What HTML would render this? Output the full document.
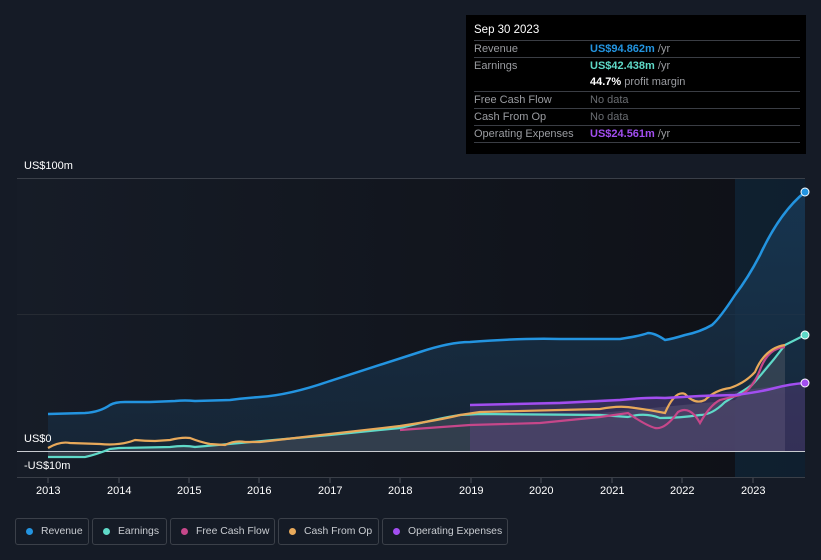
<!DOCTYPE html>
<html><head><meta charset="utf-8"><style>
html,body{margin:0;width:821px;height:560px;overflow:hidden}
body{background:#151b26;font-family:"Liberation Sans",sans-serif;position:relative}
.tt{position:absolute;left:466px;top:15px;width:340px;height:139px;background:#000;color:#fff;font-size:11px}
.tt .h{position:absolute;left:8px;top:9px;font-size:11.5px}
.row{position:absolute;left:8px;width:326px;height:17px;border-top:1px solid #3a3d44;color:#9a9ca1;font-size:11px;line-height:17px;white-space:nowrap}
.row span{position:absolute;left:116px}
.leg{position:absolute;top:518px;height:27px;border:1px solid #3b4049;border-radius:3px;color:#c9ccd1;font-size:10.4px;line-height:25px;box-sizing:border-box;white-space:nowrap}
.leg i{position:absolute;left:10px;top:9px;width:7px;height:7px;border-radius:50%}
.leg b{font-weight:normal;position:absolute;left:25px}
.ax{position:absolute;color:#fff;font-size:11px;white-space:nowrap}
</style></head><body>
<svg width="821" height="560" style="position:absolute;left:0;top:0">
<defs>
<linearGradient id="bg" x1="0" x2="1"><stop offset="0" stop-color="#161c27"/><stop offset="1" stop-color="#0e1016"/></linearGradient>
<linearGradient id="rv" x1="0" y1="0" x2="0" y2="1"><stop offset="0" stop-color="#1a3d5c" stop-opacity=".7"/><stop offset="1" stop-color="#17283a" stop-opacity=".8"/></linearGradient>
</defs>
<rect x="17" y="178" width="788" height="300" fill="url(#bg)"/>
<rect x="735" y="178" width="70" height="300" fill="#10263a" opacity=".7"/>
<line x1="17" y1="178.5" x2="805" y2="178.5" stroke="#3a3f48"/>
<line x1="17" y1="314.5" x2="805" y2="314.5" stroke="#262b33"/>
<line x1="17" y1="477.5" x2="805" y2="477.5" stroke="#3a3f48"/>
<path d="M48,414 L85,413 Q100,412 110,405 Q115,402 125,402 L150,402 L175,401 Q185,400 195,401 L230,400 Q245,398 260,397 Q290,395 330,381 Q380,365 420,352 Q450,342 470,342 Q520,338 560,339 L620,339 Q640,336 648,333 Q655,333 665,340 Q672,339 685,335 Q700,332 712,325 Q720,318 735,295 Q748,278 760,255 Q780,212 805,192 L805,451 L48,451 Z" fill="url(#rv)"/>
<path d="M48,451 L48,457 L95,455 L119,448 L170,447 L240,443 L330,435 L400,428 L470,413 L600,413 L735,400 L785,345 L785,451 Z" fill="#4a5360" opacity=".55"/>
<path d="M470,451 L470,405 L630,398 L700,395 L805,383 L805,451 Z" fill="#7a4aa0" opacity=".3"/>
<line x1="17" y1="451.5" x2="805" y2="451.5" stroke="#c8cbd0"/>
<path d="M48,414 L85,413 Q100,412 110,405 Q115,402 125,402 L150,402 L175,401 Q185,400 195,401 L230,400 Q245,398 260,397 Q290,395 330,381 Q380,365 420,352 Q450,342 470,342 Q520,338 560,339 L620,339 Q640,336 648,333 Q655,333 665,340 Q672,339 685,335 Q700,332 712,325 Q720,318 735,295 Q748,278 760,255 Q780,212 805,192" fill="none" stroke="#2394e0" stroke-width="2.5"/>
<path d="M48,457 L85,457 Q95,455 110,449 L119,448 L170,447 Q185,445 195,447 L240,443 L330,435 L400,428 Q440,418 460,415 L480,414 L600,415 L628,417 Q645,412 660,418 Q680,418 700,415 Q712,415 725,402 Q740,393 752,385 Q770,365 785,345 Q795,340 805,335" fill="none" stroke="#5fd9c8" stroke-width="2.2"/>
<path d="M400,430 L470,425 L540,423 L600,417 L628,413 Q645,425 655,428 Q665,430 678,412 Q690,405 700,423 Q710,405 720,400 L740,395 Q752,390 760,370 Q768,348 785,347" fill="none" stroke="#c6478a" stroke-width="2.2"/>
<path d="M48,448 Q60,441 70,443 L100,444 Q120,446 135,440 Q145,441 155,441 L170,440 Q182,437 190,438 Q200,442 210,444 L225,445 Q235,440 245,442 L260,442 L330,434 L400,426 Q440,420 460,415 L480,412 L560,410 L600,409 Q620,405 635,408 Q650,410 665,413 Q675,390 685,394 Q695,405 705,400 Q715,390 730,388 Q745,383 755,372 Q765,348 785,345" fill="none" stroke="#e8a95a" stroke-width="2.2"/>
<path d="M470,405 L560,403 L620,400 Q650,397 665,398 L700,396 L735,395 Q760,392 775,388 Q790,384 805,383" fill="none" stroke="#a24ef0" stroke-width="2.5"/>
<circle cx="805" cy="192" r="4" fill="#2394e0" stroke="#fff" stroke-width="1"/>
<circle cx="805" cy="335" r="4" fill="#5fd9c8" stroke="#fff" stroke-width="1"/>
<circle cx="805" cy="383" r="4" fill="#a24ef0" stroke="#fff" stroke-width="1"/>
<g stroke="#4a4f58"><line x1="48" y1="478" x2="48" y2="483"/><line x1="119" y1="478" x2="119" y2="483"/><line x1="189" y1="478" x2="189" y2="483"/><line x1="259" y1="478" x2="259" y2="483"/><line x1="330" y1="478" x2="330" y2="483"/><line x1="400" y1="478" x2="400" y2="483"/><line x1="471" y1="478" x2="471" y2="483"/><line x1="541" y1="478" x2="541" y2="483"/><line x1="612" y1="478" x2="612" y2="483"/><line x1="682" y1="478" x2="682" y2="483"/><line x1="753" y1="478" x2="753" y2="483"/></g>
</svg>
<div class="ax" style="left:24px;top:160px">US$100m</div>
<div class="ax" style="left:24px;top:433px">US$0</div>
<div class="ax" style="left:24px;top:460px">-US$10m</div>
<div class="ax" style="left:36px;top:485px">2013</div>
<div class="ax" style="left:107px;top:485px">2014</div>
<div class="ax" style="left:177px;top:485px">2015</div>
<div class="ax" style="left:247px;top:485px">2016</div>
<div class="ax" style="left:318px;top:485px">2017</div>
<div class="ax" style="left:388px;top:485px">2018</div>
<div class="ax" style="left:459px;top:485px">2019</div>
<div class="ax" style="left:529px;top:485px">2020</div>
<div class="ax" style="left:600px;top:485px">2021</div>
<div class="ax" style="left:670px;top:485px">2022</div>
<div class="ax" style="left:741px;top:485px">2023</div>
<div class="tt">
<div class="h">Sep 30 2023</div>
<div class="row" style="top:25px">Revenue<span><em style="font-style:normal;color:#2394e0;font-weight:bold">US$94.862m</em> /yr</span></div>
<div class="row" style="top:42px">Earnings<span><em style="font-style:normal;color:#5fd9c8;font-weight:bold">US$42.438m</em> /yr</span></div>
<div class="row" style="top:59px;border-top:none"><span><em style="font-style:normal;color:#fff;font-weight:bold">44.7%</em> profit margin</span></div>
<div class="row" style="top:76px">Free Cash Flow<span style="color:#6a6d72">No data</span></div>
<div class="row" style="top:93px">Cash From Op<span style="color:#6a6d72">No data</span></div>
<div class="row" style="top:110px">Operating Expenses<span><em style="font-style:normal;color:#a24ef0;font-weight:bold">US$24.561m</em> /yr</span></div>
<div class="row" style="top:127px;height:0"></div>
</div>
<div class="leg" style="left:15px;width:74px"><i style="background:#2394e0"></i><b>Revenue</b></div>
<div class="leg" style="left:92px;width:75px"><i style="background:#5fd9c8"></i><b>Earnings</b></div>
<div class="leg" style="left:170px;width:105px"><i style="background:#c6478a"></i><b>Free Cash Flow</b></div>
<div class="leg" style="left:278px;width:101px"><i style="background:#e8a95a"></i><b>Cash From Op</b></div>
<div class="leg" style="left:382px;width:126px"><i style="background:#a24ef0"></i><b>Operating Expenses</b></div>
</body></html>
